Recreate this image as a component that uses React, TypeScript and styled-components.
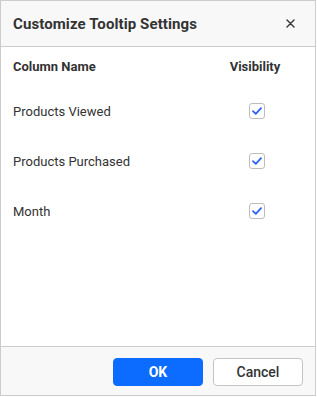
import React from "react";
import styled, { createGlobalStyle } from "styled-components";

const Global = createGlobalStyle`
  html, body { margin: 0; padding: 0; background: #fff; }
  body { font-family: Roboto, "Noto Sans", Arial, sans-serif; color: #333; }
  * { box-sizing: border-box; }
`;

const Dialog = styled.div`
  width: 316px;
  height: 396px;
  border: 1px solid #cccccc;
  background: #fff;
  display: flex;
  flex-direction: column;
`;

const Header = styled.div`
  height: 46px;
  flex: none;
  background: #f8f8f8;
  border-bottom: 1px solid #cccccc;
  display: flex;
  align-items: center;
  justify-content: space-between;
  padding: 0 19px 0 12px;
`;

const Title = styled.div`
  font-size: 15px;
  font-weight: 700;
  color: #333;
  letter-spacing: 0.1px;
`;

const Close = styled.button`
  border: 0;
  background: transparent;
  padding: 0;
  width: 12px;
  height: 12px;
  display: flex;
  align-items: center;
  justify-content: center;
  cursor: pointer;
`;

const Body = styled.div`
  flex: 1;
  display: grid;
  grid-template-columns: 1fr 60px;
  grid-template-rows: 39px repeat(3, 50px);
  align-content: start;
  padding: 0 30px 0 12px;
`;

const Cell = styled.div<{ $head?: boolean; $center?: boolean }>`
  display: flex;
  align-items: center;
  justify-content: ${(p) => (p.$center ? "center" : "flex-start")};
  font-size: 13px;
  font-weight: ${(p) => (p.$head ? 700 : 400)};
  color: #333;
`;

const Box = styled.span`
  width: 16px;
  height: 16px;
  border: 1px solid #bdbdbd;
  border-radius: 3px;
  background: #fff;
  display: flex;
  align-items: center;
  justify-content: center;
  margin-left: 3px;
`;

const Footer = styled.div`
  height: 49px;
  flex: none;
  background: #f8f8f8;
  border-top: 1px solid #cccccc;
  display: flex;
  justify-content: flex-end;
  align-items: flex-start;
  gap: 10px;
  padding: 11px 12px 0 0;
`;

const Button = styled.button<{ $primary?: boolean }>`
  width: 90px;
  height: 28px;
  border-radius: 4px;
  font-family: Roboto, "Noto Sans", Arial, sans-serif;
  font-size: 14px;
  font-weight: ${(p) => (p.$primary ? 700 : 500)};
  color: ${(p) => (p.$primary ? "#fff" : "#333")};
  background: ${(p) => (p.$primary ? "#0b6cff" : "#fff")};
  border: 1px solid ${(p) => (p.$primary ? "#0b6cff" : "#c4c4c4")};
  padding: 0;
`;

const Check = () => (
  <Box>
    <svg width="10" height="8" viewBox="0 0 10 8">
      <path d="M1 4.2 L3.8 6.8 L9 1.2" fill="none" stroke="#2f62f5" strokeWidth="1.8" strokeLinecap="round" strokeLinejoin="round" />
    </svg>
  </Box>
);

const rows = ["Products Viewed", "Products Purchased", "Month"];

export default function App() {
  return (
    <>
      <Global />
      <Dialog>
        <Header>
          <Title>Customize Tooltip Settings</Title>
          <Close aria-label="close">
            <svg width="9" height="9" viewBox="0 0 9 9">
              <path d="M1 1 L8 8 M8 1 L1 8" stroke="#333" strokeWidth="1.4" strokeLinecap="round" />
            </svg>
          </Close>
        </Header>
        <Body>
          <Cell $head>Column Name</Cell>
          <Cell $head $center>Visibility</Cell>
          {rows.map((r) => (
            <React.Fragment key={r}>
              <Cell>{r}</Cell>
              <Cell $center>
                <Check />
              </Cell>
            </React.Fragment>
          ))}
        </Body>
        <Footer>
          <Button $primary>OK</Button>
          <Button>Cancel</Button>
        </Footer>
      </Dialog>
    </>
  );
}
